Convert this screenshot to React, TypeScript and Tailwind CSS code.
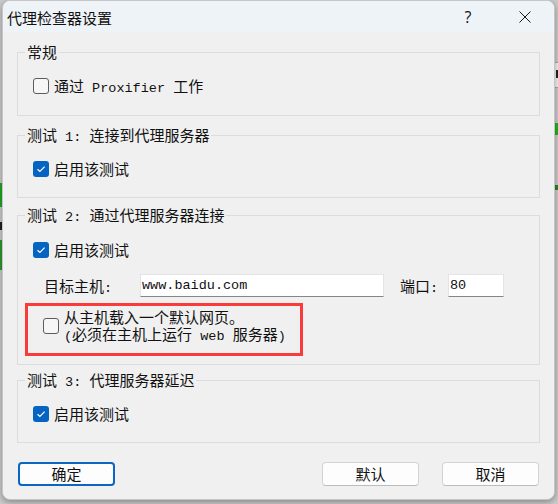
import React from "react";

// half-width text in the dialog is a fixed-pitch face, CJK is full width
function M({ children }: { children: React.ReactNode }) {
  return <span className="font-['Liberation_Mono',monospace] text-[13.5px] leading-none">{children}</span>;
}

function CheckBox({ checked }: { checked?: boolean }) {
  if (checked) {
    return (
      <span className="w-[16px] h-[16px] rounded-[3px] bg-[#0563c1] flex items-center justify-center shrink-0">
        <svg width="10" height="8" viewBox="0 0 10 8">
          <path d="M1.5 4.3 L3.9 6.5 L8.6 1.6" fill="none" stroke="#ffffff" strokeWidth="1.2" />
        </svg>
      </span>
    );
  }
  return <span className="w-[16px] h-[16px] rounded-[3px] border border-[#5c5c5c] bg-[#f6f6f6] shrink-0" />;
}

// group box: the caption sits on top of the frame line
function Group({
  title,
  className,
  children,
}: {
  title: React.ReactNode;
  className?: string;
  children: React.ReactNode;
}) {
  return (
    <div className={`relative border border-[#dcdcdc] ${className ?? ""}`}>
      <span className="absolute left-[7px] top-[-11px] px-[2px] bg-[#f0f0f0] leading-[20px] whitespace-nowrap">
        {title}
      </span>
      {children}
    </div>
  );
}

function Row({ checked, children }: { checked?: boolean; children: React.ReactNode }) {
  return (
    <div className="flex items-center gap-[5px] h-[20px] pl-[15px]">
      <CheckBox checked={checked} />
      <span className="leading-[20px] whitespace-nowrap">{children}</span>
    </div>
  );
}

export default function App() {
  return (
    <div className="w-[558px] h-[504px] bg-[#cbcbcb] relative overflow-hidden font-['Noto_Sans_CJK_SC',sans-serif] text-[15px] text-[#111]">
      {/* bits of the window behind the dialog */}
      <div className="absolute left-0 top-[183px] w-[3px] h-[24px] bg-[#22a822]" />
      <div className="absolute left-0 top-[222px] w-[2px] h-[8px] bg-[#222]" />
      <div className="absolute left-0 top-[240px] w-[2px] h-[30px] bg-[#2f9a2f]" />
      <div className="absolute right-0 top-[62px] w-[3px] h-[26px] border-y border-[#a9a9a9] bg-[#f2f2f2]" />
      <div className="absolute right-0 top-[70px] w-[2px] h-[8px] bg-[#222]" />
      <div className="absolute right-0 top-[123px] w-[3px] h-[12px] bg-[#22b522]" />
      <div className="absolute right-0 top-[185px] w-[3px] h-[5px] bg-[#1c8f1c]" />

      <div className="pl-[2px] relative">
        <div className="w-[553px] h-[500px] rounded-[8px] border border-[#c6c6c6] bg-[#f0f0f0] overflow-hidden flex flex-col shadow-[0_2px_6px_rgba(0,0,0,0.35)]">
          {/* title bar */}
          <div className="h-[31px] bg-[#eef3f8] flex items-center shrink-0">
            <span className="flex-1 pl-[4px] pt-[3px] leading-[20px]">代理检查器设置</span>
            <span className="w-[46px] mr-[11px] text-center font-['Open_Sans',sans-serif] text-[16px] leading-[20px]">?</span>
            <span className="w-[46px] mr-[6px] flex items-center justify-center">
              <svg width="12" height="12" viewBox="0 0 12 12">
                <path d="M0.5 0.5 L11.5 11.5 M11.5 0.5 L0.5 11.5" stroke="#1a1a1a" strokeWidth="1" />
              </svg>
            </span>
          </div>

          {/* body */}
          <div className="flex-1 flex flex-col px-[14px]">
            <Group title="常规" className="mt-[20px] pt-[23px] pb-[19px]">
              <Row>
                通过<M> Proxifier </M>工作
              </Row>
            </Group>

            <Group
              title={
                <>
                  测试<M> 1: </M>连接到代理服务器
                </>
              }
              className="mt-[19px] pt-[23px] pb-[18px]"
            >
              <Row checked>启用该测试</Row>
            </Group>

            <Group
              title={
                <>
                  测试<M> 2: </M>通过代理服务器连接
                </>
              }
              className="mt-[17px] pt-[24px] pb-[8px]"
            >
              <Row checked>启用该测试</Row>

              <div className="flex items-center mt-[14px] pl-[26px] h-[23px]">
                <span className="w-[96px] leading-[20px]">
                  目标主机<M>:</M>
                </span>
                <div className="w-[244px] h-[23px] bg-white border border-[#e4e4e4] border-b-[#868686] flex items-center pl-[1px]">
                  <M>www.baidu.com</M>
                </div>
                <span className="ml-[16px] w-[48px] leading-[20px]">
                  端口<M>:</M>
                </span>
                <div className="w-[56px] h-[23px] bg-white border border-[#e4e4e4] border-b-[#868686] flex items-center pl-[1px]">
                  <M>80</M>
                </div>
              </div>

              <div className="ml-[7px] mt-[6px] w-[278px] h-[53px] border-[3px] border-[#fb3a3a] flex items-center gap-[5px] pl-[15px] pt-[3px] pb-[11px]">
                <CheckBox />
                <div className="leading-[17px] whitespace-nowrap">
                  <div>从主机载入一个默认网页。</div>
                  <div>
                    <M>(</M>必须在主机上运行<M> web </M>服务器<M>)</M>
                  </div>
                </div>
              </div>
            </Group>

            <Group
              title={
                <>
                  测试<M> 3: </M>代理服务器延迟
                </>
              }
              className="mt-[15px] pt-[23px] pb-[18px]"
            >
              <Row checked>启用该测试</Row>
            </Group>

            {/* buttons */}
            <div className="flex justify-between mt-[19px] px-[1px]">
              <button className="w-[97px] h-[24px] rounded-[4px] border-2 border-[#0a66c2] bg-[#fdfdfd] leading-[20px]">
                确定
              </button>
              <div className="flex gap-[23px]">
                <button className="w-[97px] h-[24px] rounded-[4px] border border-[#d3d3d3] border-b-[#bcbcbc] bg-[#fdfdfd] leading-[20px]">
                  默认
                </button>
                <button className="w-[97px] h-[24px] rounded-[4px] border border-[#d3d3d3] border-b-[#bcbcbc] bg-[#fdfdfd] leading-[20px]">
                  取消
                </button>
              </div>
            </div>
          </div>
        </div>
      </div>
    </div>
  );
}
